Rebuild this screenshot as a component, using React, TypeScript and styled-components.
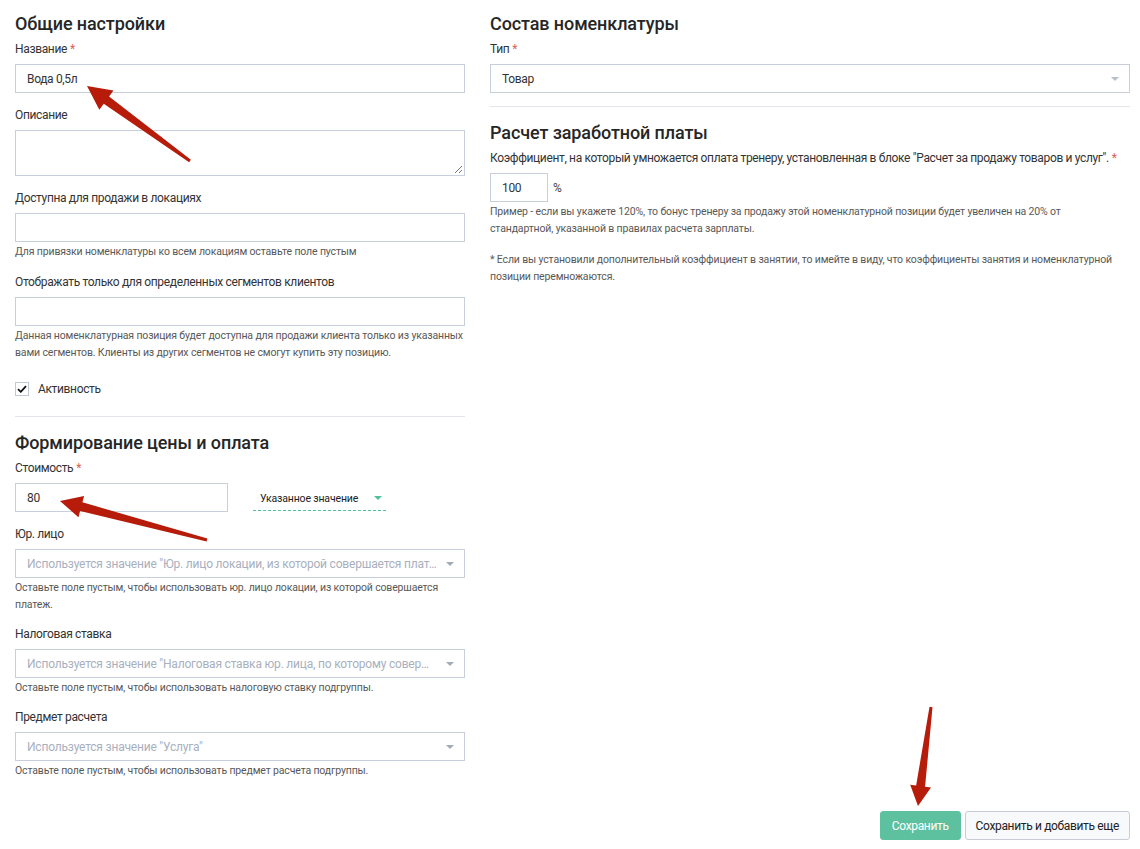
import React from "react";
import styled, { createGlobalStyle } from "styled-components";

const Global = createGlobalStyle`
  html, body { margin: 0; padding: 0; background: #fff; }
  body { font-family: Roboto, "Noto Sans", "Liberation Sans", sans-serif; color: #333; letter-spacing: -0.35px; }
  * { box-sizing: border-box; }
`;

const Page = styled.div`
  position: relative;
  width: 1140px;
  min-height: 849px;
  padding: 12px 10px 9px 15px;
`;

const Columns = styled.div`
  display: grid;
  grid-template-columns: 450px 640px;
  column-gap: 25px;
  align-items: start;
`;

const Column = styled.div`
  display: flex;
  flex-direction: column;
`;

const Heading = styled.h2`
  margin: 0 0 5px;
  font-size: 18px;
  line-height: 24px;
  font-weight: 500;
  letter-spacing: -0.1px;
  color: #262626;
`;

const Field = styled.div<{ $gap?: number }>`
  display: flex;
  flex-direction: column;
  margin-bottom: ${(p) => (p.$gap ?? 14)}px;
`;

const Label = styled.div`
  font-size: 12px;
  line-height: 16px;
  color: #333;
  margin-bottom: 7px;
`;

const Req = styled.span`
  color: #e0605a;
  margin-left: 3px;
`;

const Input = styled.div<{ $w?: number; $h?: number }>`
  width: ${(p) => (p.$w ? `${p.$w}px` : "100%")};
  height: ${(p) => p.$h ?? 29}px;
  border: 1px solid #c9cfda;
  background: #fff;
  padding: 0 11px;
  display: flex;
  align-items: center;
  font-size: 12px;
  color: #333;
  position: relative;
  flex-shrink: 0;
`;

const Resize = styled.svg`
  position: absolute;
  right: 1px;
  bottom: 1px;
`;

const Select = styled(Input)`
  justify-content: space-between;
  gap: 8px;
  padding-right: 10px;
`;

const SelectText = styled.span<{ $placeholder?: boolean }>`
  color: ${(p) => (p.$placeholder ? "#a9b0bd" : "#333")};
  white-space: nowrap;
  overflow: hidden;
  text-overflow: ellipsis;
  font-size: 12px;
  letter-spacing: ${(p) => (p.$placeholder ? "-0.2px" : "-0.35px")};
`;

const Caret = styled.span<{ $color?: string }>`
  width: 0;
  height: 0;
  border-left: 4px solid transparent;
  border-right: 4px solid transparent;
  border-top: 4px solid ${(p) => p.$color ?? "#a3aab8"};
  flex-shrink: 0;
`;

const Help = styled.div<{ $max?: number }>`
  font-size: 10.5px;
  line-height: 17px;
  letter-spacing: -0.15px;
  color: #585858;
  margin-top: 1px;
  max-width: ${(p) => (p.$max ? `${p.$max}px` : "none")};
`;

const CheckRow = styled.label`
  display: flex;
  align-items: center;
  gap: 9px;
  margin-top: 20px;
  font-size: 12px;
  line-height: 16px;
  color: #333;
`;

const CheckBox = styled.span`
  width: 14px;
  height: 14px;
  border: 1px solid #c3c9d4;
  display: flex;
  align-items: center;
  justify-content: center;
  background: #fff;
`;

const Divider = styled.hr<{ $top: number; $bottom: number }>`
  border: 0;
  border-top: 1px solid #e3e5ea;
  margin: ${(p) => p.$top}px 0 ${(p) => p.$bottom}px;
  width: 100%;
`;

const PriceRow = styled.div`
  display: flex;
  align-items: center;
  gap: 25px;
`;

const Mode = styled.div`
  width: 133px;
  height: 24px;
  margin-top: 2px;
  border-bottom: 1px dashed #4dc29c;
  display: flex;
  align-items: center;
  justify-content: space-between;
  padding: 0 4px 0 7px;
  font-size: 10.5px;
  letter-spacing: -0.15px;
  color: #222;
`;

const PercentRow = styled.div`
  display: flex;
  align-items: center;
  gap: 5px;
  font-size: 12px;
  color: #444;
`;

const Text = styled.div`
  font-size: 12px;
  line-height: 16px;
  color: #333;
  margin-bottom: 7px;
  white-space: nowrap;
`;

const Note = styled(Help)`
  margin-top: 14px;
`;

const Footer = styled.div`
  display: flex;
  justify-content: flex-end;
  gap: 4px;
  margin-top: 32px;
`;

const Button = styled.button<{ $primary?: boolean }>`
  height: 29px;
  padding: 0 ${(p) => (p.$primary ? 11 : 10)}px;
  border-radius: 3px;
  font-family: inherit;
  letter-spacing: -0.35px;
  font-size: 12px;
  border: 1px solid ${(p) => (p.$primary ? "#5dc09f" : "#c8ccd6")};
  background: ${(p) => (p.$primary ? "#5dc09f" : "#f8f9fb")};
  color: ${(p) => (p.$primary ? "#fff" : "#222")};
  cursor: pointer;
`;

const Overlay = styled.svg`
  position: absolute;
  left: 0;
  top: 0;
  pointer-events: none;
`;

type Pt = [number, number];

function arrowPoints(tail: Pt, tip: Pt, headLen = 22, headW = 24, tailW = 3, neckW = 9) {
  const dx = tip[0] - tail[0];
  const dy = tip[1] - tail[1];
  const len = Math.hypot(dx, dy);
  const ux = dx / len;
  const uy = dy / len;
  const nx = -uy;
  const ny = ux;
  const base: Pt = [tip[0] - ux * headLen, tip[1] - uy * headLen];
  const p = (c: Pt, w: number): string => `${c[0] + nx * w},${c[1] + ny * w}`;
  const pts = [
    p(tail, tailW / 2),
    p(base, neckW / 2),
    p(base, headW / 2),
    `${tip[0]},${tip[1]}`,
    p(base, -headW / 2),
    p(base, -neckW / 2),
    p(tail, -tailW / 2),
  ];
  return pts.join(" ");
}

const arrows: { tail: Pt; tip: Pt; hl: number; hw: number }[] = [
  { tail: [190, 161], tip: [87, 86], hl: 24, hw: 24 },
  { tail: [207, 540], tip: [60, 501], hl: 22, hw: 22 },
  { tail: [931, 707], tip: [918, 806], hl: 20, hw: 21 },
];

export default function App() {
  return (
    <Page>
      <Global />
      <Columns>
        <Column>
          <Heading>Общие настройки</Heading>
          <Field>
            <Label>
              Название<Req>*</Req>
            </Label>
            <Input>Вода 0,5л</Input>
          </Field>
          <Field>
            <Label>Описание</Label>
            <Input $h={46}>
              <Resize width="10" height="10" viewBox="0 0 10 10">
                <path d="M9 2 L2 9 M9 6 L6 9" stroke="#777" strokeWidth="1" />
              </Resize>
            </Input>
          </Field>
          <Field>
            <Label>Доступна для продажи в локациях</Label>
            <Input />
            <Help>Для привязки номенклатуры ко всем локациям оставьте поле пустым</Help>
          </Field>
          <Field $gap={0}>
            <Label>Отображать только для определенных сегментов клиентов</Label>
            <Input />
            <Help>
              Данная номенклатурная позиция будет доступна для продажи клиента только из указанных
              вами сегментов. Клиенты из других сегментов не смогут купить эту позицию.
            </Help>
          </Field>
          <CheckRow>
            <CheckBox>
              <svg width="10" height="8" viewBox="0 0 10 8">
                <path d="M1 4.2 L3.8 6.8 L9 1.2" fill="none" stroke="#111" strokeWidth="1.8" />
              </svg>
            </CheckBox>
            Активность
          </CheckRow>
          <Divider $top={19} $bottom={14} />
          <Heading>Формирование цены и оплата</Heading>
          <Field>
            <Label>
              Стоимость<Req>*</Req>
            </Label>
            <PriceRow>
              <Input $w={213}>80</Input>
              <Mode>
                Указанное значение
                <Caret $color="#4dc29c" />
              </Mode>
            </PriceRow>
          </Field>
          <Field $gap={13}>
            <Label>Юр. лицо</Label>
            <Select>
              <SelectText $placeholder>
                Используется значение "Юр. лицо локации, из которой совершается платеж"
              </SelectText>
              <Caret />
            </Select>
            <Help>
              Оставьте поле пустым, чтобы использовать юр. лицо локации, из которой совершается
              платеж.
            </Help>
          </Field>
          <Field $gap={13}>
            <Label>Налоговая ставка</Label>
            <Select>
              <SelectText $placeholder>
                Используется значение "Налоговая ставка юр. лица, по которому совершается платеж"
              </SelectText>
              <Caret />
            </Select>
            <Help>Оставьте поле пустым, чтобы использовать налоговую ставку подгруппы.</Help>
          </Field>
          <Field $gap={0}>
            <Label>Предмет расчета</Label>
            <Select>
              <SelectText $placeholder>Используется значение "Услуга"</SelectText>
              <Caret />
            </Select>
            <Help>Оставьте поле пустым, чтобы использовать предмет расчета подгруппы.</Help>
          </Field>
        </Column>

        <Column>
          <Heading>Состав номенклатуры</Heading>
          <Field $gap={0}>
            <Label>
              Тип<Req>*</Req>
            </Label>
            <Select>
              <SelectText>Товар</SelectText>
              <Caret $color="#b9bfca" />
            </Select>
          </Field>
          <Divider $top={13} $bottom={14} />
          <Heading>Расчет заработной платы</Heading>
          <Text>
            Коэффициент, на который умножается оплата тренеру, установленная в блоке "Расчет за
            продажу товаров и услуг".<Req>*</Req>
          </Text>
          <PercentRow>
            <Input $w={58}>100</Input>%
          </PercentRow>
          <Help $max={628}>
            Пример - если вы укажете 120%, то бонус тренеру за продажу этой номенклатурной позиции
            будет увеличен на 20% от стандартной, указанной в правилах расчета зарплаты.
          </Help>
          <Note $max={628}>
            * Если вы установили дополнительный коэффициент в занятии, то имейте в виду, что
            коэффициенты занятия и номенклатурной позиции перемножаются.
          </Note>
        </Column>
      </Columns>

      <Footer>
        <Button $primary>Сохранить</Button>
        <Button>Сохранить и добавить еще</Button>
      </Footer>

      <Overlay width="1140" height="849" viewBox="0 0 1140 849">
        {arrows.map((a, i) => (
          <polygon key={i} points={arrowPoints(a.tail, a.tip, a.hl, a.hw)} fill="#b71c0b" />
        ))}
      </Overlay>
    </Page>
  );
}
